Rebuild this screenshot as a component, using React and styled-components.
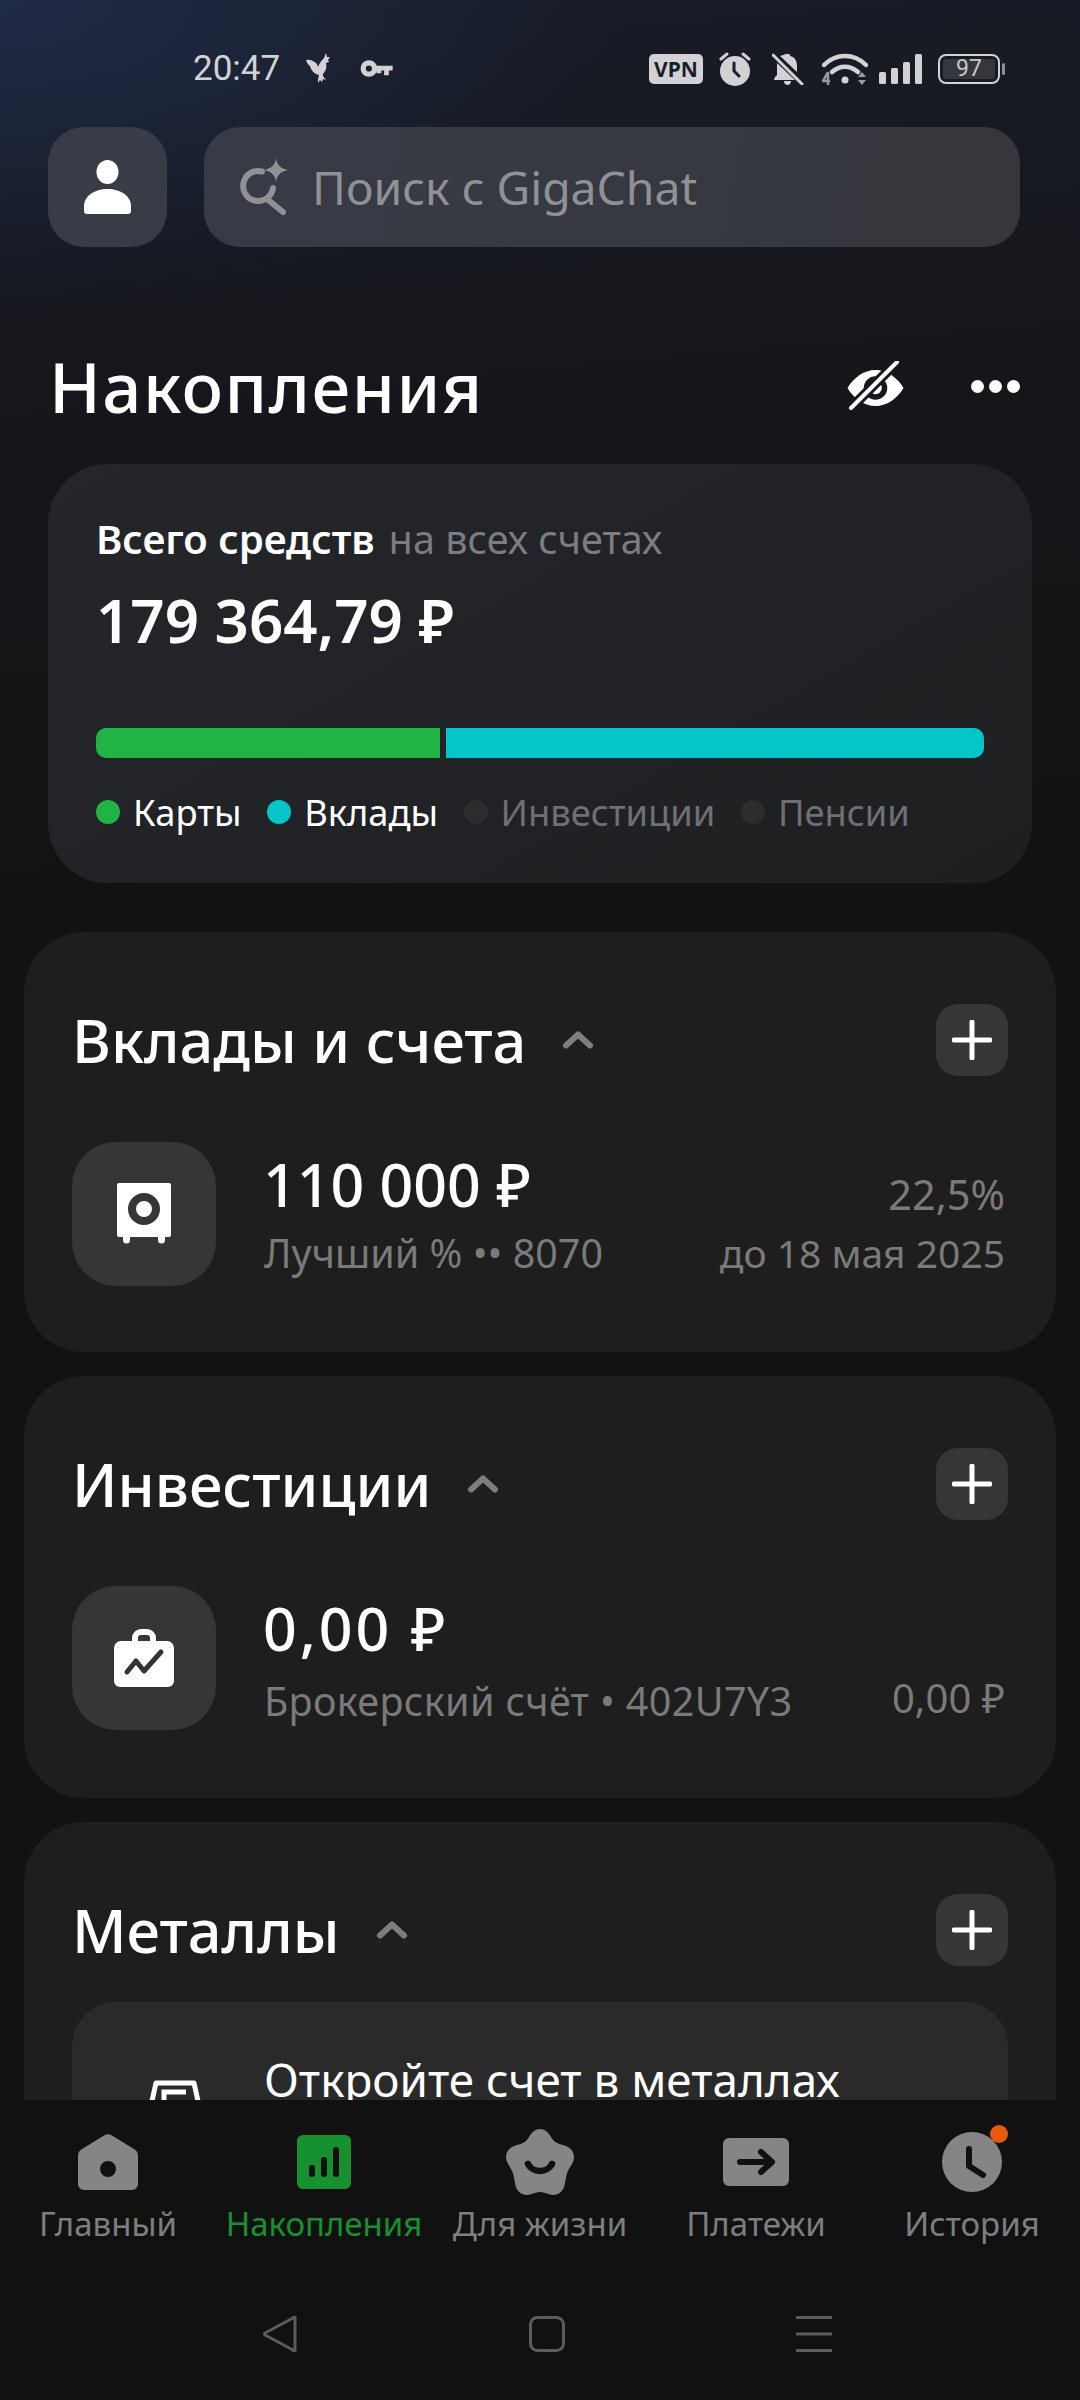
import React from "react";
import styled, { createGlobalStyle } from "styled-components";

const Chevron = () => (
  <ChevronSvg viewBox="0 0 32 18" fill="none">
    <path d="M4 14.500L16 3.500l12 11" stroke="#7d7d7d" strokeWidth="6" strokeLinecap="round" strokeLinejoin="round" />
  </ChevronSvg>
);

const Plus = () => (
  <PlusBtn>
    <svg width="40" height="40" viewBox="0 0 40 40" fill="none">
      <path d="M20 2v36M2 20h36" stroke="#fff" strokeWidth="5" strokeLinecap="round" />
    </svg>
  </PlusBtn>
);

const SafeIcon = () => (
  <svg width="54" height="62" viewBox="0 0 54 62">
    <path
      fillRule="evenodd"
      fill="#fff"
      d="M2 0h50a2 2 0 0 1 2 2v50a2 2 0 0 1-2 2h-4v3a3.500 3.500 0 0 1-7 0v-3H13v3a3.500 3.500 0 0 1-7 0v-3H2a2 2 0 0 1-2-2V2a2 2 0 0 1 2-2zM27 10a16 16 0 1 0 0 32 16 16 0 0 0 0-32zM27 18a8 8 0 1 1 0 16 8 8 0 0 1 0-16z"
    />
  </svg>
);

const CaseIcon = () => (
  <svg width="60" height="58" viewBox="0 0 60 58">
    <path
      fill="#fff"
      d="M18 12V9a9 9 0 0 1 9-9h6a9 9 0 0 1 9 9v3h11a7 7 0 0 1 7 7v33a6 6 0 0 1-6 6H6a6 6 0 0 1-6-6V19a7 7 0 0 1 7-7zm6 0h12V9a3 3 0 0 0-3-3h-6a3 3 0 0 0-3 3z"
    />
    <path d="M13 43l9-11 8 10 17-19" fill="none" stroke="#333" strokeWidth="5" strokeLinecap="round" strokeLinejoin="round" />
  </svg>
);

const MetalIcon = () => (
  <svg width="58" height="40" viewBox="0 0 58 40" fill="none">
    <path d="M10 3h38l8 36H2z" stroke="#fff" strokeWidth="5" strokeLinejoin="round" />
    <path d="M18 28V12h22" stroke="#fff" strokeWidth="5" />
  </svg>
);

const HomeIcon = () => (
  <svg width="60" height="56" viewBox="0 0 60 56">
    <path
      fillRule="evenodd"
      fill="#858585"
      d="M26 1.500a8 8 0 0 1 8 0l22 13.500a8 8 0 0 1 4 7V50a6 6 0 0 1-6 6H6a6 6 0 0 1-6-6V22a8 8 0 0 1 4-7zM30 27a8 8 0 1 0 0 16 8 8 0 0 0 0-16z"
    />
  </svg>
);

const BarsIcon = () => (
  <svg width="54" height="54" viewBox="0 0 54 54">
    <rect width="54" height="54" rx="6" fill="#17902f" />
    <g fill="#111">
      <rect x="12" y="30" width="6" height="12" rx="3" />
      <rect x="24" y="22" width="6" height="20" rx="3" />
      <rect x="36" y="12" width="6" height="30" rx="3" />
    </g>
  </svg>
);

const StarIcon = () => (
  <svg width="68" height="66" viewBox="0 0 68 66">
    <path
      fill="#858585"
      d="M34 0c5 0 8 3 11 8 3 5 7 7 12 8 7 2 11 6 11 12 0 5-3 8-5 12-3 5-3 10-4 14-1 8-6 12-12 12-4 0-8-3-13-3s-9 3-13 3c-6 0-11-4-12-12-1-4-1-9-4-14-2-4-5-7-5-12 0-6 4-10 11-12 5-1 9-3 12-8 3-5 6-8 11-8z"
    />
    <path d="M22 35c2 4 7 7 12 7s10-3 12-7" fill="none" stroke="#111" strokeWidth="6.500" strokeLinecap="round" />
  </svg>
);

const PayIcon = () => (
  <svg width="66" height="48" viewBox="0 0 66 48">
    <rect width="66" height="48" rx="6" fill="#858585" />
    <path d="M17 24h31M38 14l11 10-11 10" fill="none" stroke="#111" strokeWidth="6" strokeLinecap="round" strokeLinejoin="round" />
  </svg>
);

const ClockIcon = () => (
  <svg width="60" height="60" viewBox="0 0 60 60">
    <circle cx="30" cy="30" r="30" fill="#858585" />
    <path d="M27 17v17l14 9" fill="none" stroke="#111" strokeWidth="6" strokeLinecap="round" strokeLinejoin="round" />
  </svg>
);

const tabs = [
  { label: "Главный", icon: <HomeIcon /> },
  { label: "Накопления", icon: <BarsIcon />, active: true },
  { label: "Для жизни", icon: <StarIcon /> },
  { label: "Платежи", icon: <PayIcon /> },
  { label: "История", icon: <ClockIcon />, badge: true },
];

const legend = [
  { label: "Карты", color: "#22b345", on: true },
  { label: "Вклады", color: "#04c6c8", on: true },
  { label: "Инвестиции", color: "#2c2d2f" },
  { label: "Пенсии", color: "#2c2d2f" },
];

const App = () => {
  return (
    <>
      <GlobalStyle />
      <Screen>
        <Scroll>
          <StatusBar>
            <Time>20:47</Time>
            <svg width="28" height="31" viewBox="0 0 28 31" fill="#d2d2d5">
              <path d="M0 7c4-1 8 1 11 4 0 1 1 2 1 3 1-3 3-6 6-9l2-5 1 4 3 0-2 3 1 2-3 1c1 4 0 8-3 11l0 2 3 4-3-1-1 3-2-2-2 3 0-4 1-4C8 21 5 17 4 13 2 12 1 10 0 7z" />
            </svg>
            <svg width="33" height="19" viewBox="0 0 34 20" fill="none">
              <circle cx="9" cy="10" r="6" stroke="#d2d2d5" strokeWidth="5.500" />
              <path d="M14 7h20v5h-4v5h-5v-5h-3v3h-5v-3h-3z" fill="#d2d2d5" />
            </svg>
            <StatusRight>
              <VpnBadge>VPN</VpnBadge>
              <svg width="32" height="34" viewBox="0 0 32 34">
                <circle cx="16" cy="19" r="15" fill="#d2d2d5" />
                <path d="M15 11v8l5 5" fill="none" stroke="#1a1e28" strokeWidth="3" strokeLinecap="round" />
                <path d="M2 7l6-5M30 7l-6-5" stroke="#d2d2d5" strokeWidth="3" strokeLinecap="round" />
              </svg>
              <BellSvg width="32" height="32" viewBox="0 0 32 32">
                <path
                  d="M14 1h3a1.500 1.500 0 0 1 1 2c5 1 7 5 7 10v6l-17-16zM5 10l18 17H2c0-2 1-3 3-5zM12 28h7c0 3-2 4-3.500 4S12 31 12 28z"
                  fill="#d2d2d5"
                />
                <path d="M1 2l29 29" stroke="#d2d2d5" strokeWidth="3" strokeLinecap="round" />
              </BellSvg>
              <WifiSvg width="46" height="34" viewBox="0 0 46 34" fill="none">
                <path d="M2 13C14 1 32 1 44 13" stroke="#d2d2d5" strokeWidth="4.500" strokeLinecap="round" />
                <path d="M10 20c8-7 18-7 26 0" stroke="#d2d2d5" strokeWidth="4.500" strokeLinecap="round" />
                <circle cx="23" cy="28" r="3.500" fill="#d2d2d5" />
                <path d="M6 20l-5 9h7M6 20v13" stroke="#9a9a9d" strokeWidth="2.500" />
                <path d="M36 25l4-5 4 5zM36 28l4 5 4-5z" fill="#9a9a9d" />
              </WifiSvg>
              <svg width="43" height="30" viewBox="0 0 43 30" fill="#d2d2d5">
                <rect y="18" width="7" height="12" rx="1.500" />
                <rect x="12" y="14" width="7" height="16" rx="1.500" />
                <rect x="24" y="8" width="7" height="22" rx="1.500" />
                <rect x="36" width="7" height="30" rx="1.500" />
              </svg>
              <Battery>
                <BatteryFill>97</BatteryFill>
              </Battery>
            </StatusRight>
          </StatusBar>

          <SearchRow>
            <Avatar>
              <svg width="47" height="54" viewBox="0 0 47 54" fill="#fff">
                <ellipse cx="23.500" cy="12" rx="11" ry="12" />
                <path d="M23.500 29c13 0 23.500 7 23.500 17v5a3 3 0 0 1-3 3H3a3 3 0 0 1-3-3v-5c0-10 10.500-17 23.500-17z" />
              </svg>
            </Avatar>
            <SearchBox>
              <svg width="50" height="58" viewBox="0 0 50 58" fill="none">
                <path d="M22 13.500A15 15 0 1 0 33 30M27 41l16 13" stroke="#8f9196" strokeWidth="6" strokeLinecap="round" />
                <path d="M36 0c1 7 4 10 12 12-8 2-11 5-12 12-1-7-4-10-12-12 8-2 11-5 12-12z" fill="#8f9196" />
              </svg>
              <SearchText>Поиск с GigaChat</SearchText>
            </SearchBox>
          </SearchRow>

          <TitleRow>
            <PageTitle>Накопления</PageTitle>
            <svg width="58" height="50" viewBox="0 0 58 50" fill="none">
              <path fill="#fff" d="M28.500 9c12 0 22 8 28 18-6 10-16 18-28 18S6.500 37 .5 27c6-10 16-18 28-18z" />
              <circle cx="28.500" cy="27" r="9" stroke="#15181e" strokeWidth="5.500" />
              <path d="M50 1L4 47" stroke="#15181e" strokeWidth="10" />
              <path d="M50 1L4 47" stroke="#fff" strokeWidth="4" strokeLinecap="round" />
            </svg>
            <Dots>
              <i />
              <i />
              <i />
            </Dots>
          </TitleRow>

          <Summary>
            <SummaryHead>
              <b>Всего средств</b>
              <span>на всех счетах</span>
            </SummaryHead>
            <SummaryAmount>179 364,79 ₽</SummaryAmount>
            <Bar>
              <BarPart $grow={344} $color="#22b345" />
              <BarPart $grow={538} $color="#04c6c8" />
            </Bar>
            <Legend>
              {legend.map((item) => (
                <LegendItem key={item.label} $on={item.on}>
                  <LegendDot $color={item.color} />
                  {item.label}
                </LegendItem>
              ))}
            </Legend>
          </Summary>

          <Section $bottom={66}>
            <SectionHead>
              <SectionTitle>Вклады и счета</SectionTitle>
              <Chevron />
              <Plus />
            </SectionHead>
            <Row>
              <RowIcon>
                <SafeIcon />
              </RowIcon>
              <RowMain>
                <RowAmount>110 000 ₽</RowAmount>
                <RowSub>Лучший % •• 8070</RowSub>
              </RowMain>
              <RowSide>
                <RowSideValue $size={41.5}>22,5%</RowSideValue>
                <RowSub $gap={11} $size={39}>
                  до 18 мая 2025
                </RowSub>
              </RowSide>
            </Row>
          </Section>

          <Section $bottom={68}>
            <SectionHead>
              <SectionTitle>Инвестиции</SectionTitle>
              <Chevron />
              <Plus />
            </SectionHead>
            <Row>
              <RowIcon>
                <CaseIcon />
              </RowIcon>
              <RowMain>
                <RowAmount $spacing={3}>0,00 ₽</RowAmount>
                <RowSub $gap={9} $spacing={0.36}>
                  Брокерский счёт • 402U7Y3
                </RowSub>
              </RowMain>
              <RowSide>
                <RowSideValue $top={88}>0,00 ₽</RowSideValue>
              </RowSide>
            </Row>
          </Section>

          <Section>
            <SectionHead>
              <SectionTitle>Металлы</SectionTitle>
              <Chevron />
              <Plus />
            </SectionHead>
            <Promo>
              <PromoIcon>
                <MetalIcon />
              </PromoIcon>
              <PromoText>Откройте счет в металлах</PromoText>
            </Promo>
          </Section>
        </Scroll>

        <TabBar>
          {tabs.map((tab) => (
            <Tab key={tab.label} $active={tab.active}>
              <TabIcon>
                {tab.icon}
                {tab.badge && <Badge />}
              </TabIcon>
              {tab.label}
            </Tab>
          ))}
        </TabBar>

        <GestureBar>
          <svg width="36" height="36" viewBox="0 0 36 36" fill="none">
            <path d="M33 2v32a1 1 0 0 1-2 0L3 19a1.500 1.500 0 0 1 0-2L31 2a1 1 0 0 1 2 0z" stroke="#5c5c5c" strokeWidth="3" strokeLinejoin="round" />
          </svg>
          <svg width="36" height="36" viewBox="0 0 36 36" fill="none">
            <rect x="1.500" y="1.500" width="33" height="33" rx="7" stroke="#5c5c5c" strokeWidth="3" />
          </svg>
          <svg width="36" height="36" viewBox="0 0 36 36" fill="#5c5c5c">
            <rect y="0" width="36" height="3" />
            <rect y="16.500" width="36" height="3" />
            <rect y="33" width="36" height="3" />
          </svg>
        </GestureBar>
      </Screen>
    </>
  );
};

const GlobalStyle = createGlobalStyle`
  html, body {
    margin: 0;
    padding: 0;
    background: #121212;
  }
  * {
    box-sizing: border-box;
  }
`;

const Screen = styled.div`
  width: 1080px;
  height: 2400px;
  display: flex;
  flex-direction: column;
  overflow: hidden;
  font-family: "Noto Sans", "Liberation Sans", sans-serif;
  color: #fff;
  background: #111;
`;

const Scroll = styled.div`
  height: 2100px;
  flex-shrink: 0;
  overflow: hidden;
  background: radial-gradient(ellipse 620px 300px at 0 0, #1f2a46 0%, rgba(31, 42, 70, 0) 100%),
    linear-gradient(175deg, #191d28 0%, #15171c 380px, #121212 900px);
`;

const StatusBar = styled.div`
  height: 127px;
  padding: 10px 80px 0 193px;
  display: flex;
  align-items: center;
  gap: 26px;
`;

const Time = styled.div`
  font-family: Roboto, sans-serif;
  font-size: 35px;
  line-height: 38px;
  color: #d2d2d5;
`;

const StatusRight = styled.div`
  margin-left: auto;
  display: flex;
  align-items: center;
  gap: 16px;
`;

const VpnBadge = styled.div`
  width: 54px;
  height: 30px;
  border-radius: 5px;
  background: #d2d2d5;
  color: #1a1e28;
  font-size: 21px;
  font-weight: 700;
  line-height: 30px;
  text-align: center;
`;

const BellSvg = styled.svg`
  margin: 0 2px 0 5px;
`;

const WifiSvg = styled.svg`
  margin-right: -5px;
`;

const Battery = styled.div`
  width: 62px;
  height: 30px;
  padding: 3px;
  border: 2px solid #d2d2d5;
  border-radius: 8px;
  position: relative;
  &:after {
    content: "";
    position: absolute;
    right: -7px;
    top: 7px;
    width: 3px;
    height: 12px;
    border-radius: 2px;
    background: #8f8f92;
  }
`;

const BatteryFill = styled.div`
  height: 100%;
  border-radius: 3px;
  background: #35373d;
  color: #c8c8cb;
  font-family: Roboto, sans-serif;
  font-size: 23px;
  line-height: 20px;
  text-align: center;
`;

const SearchRow = styled.div`
  height: 120px;
  padding: 0 60px 0 48px;
  display: flex;
  gap: 37px;
`;

const Avatar = styled.div`
  width: 119px;
  border-radius: 36px;
  background: #383c47;
  display: flex;
  align-items: center;
  justify-content: center;
`;

const SearchBox = styled.div`
  flex: 1;
  border-radius: 36px;
  background: linear-gradient(100deg, #383b46 0%, #35373c 100%);
  padding: 0 36px;
  display: flex;
  align-items: center;
  gap: 22px;
`;

const SearchText = styled.div`
  font-size: 46.3px;
  color: #8f9196;
`;

const TitleRow = styled.div`
  height: 120px;
  margin: 79px 60px 18px 49px;
  display: flex;
  align-items: center;
  gap: 66px;
`;

const PageTitle = styled.h1`
  margin: 0 auto 0 0;
  font-size: 69px;
  font-weight: 500;
  letter-spacing: 1.5px;
  line-height: 1;
`;

const Dots = styled.div`
  display: flex;
  gap: 5px;
  i {
    width: 13px;
    height: 13px;
    border-radius: 50%;
    background: #fff;
  }
`;

const Summary = styled.div`
  height: 419px;
  margin: 0 48px 49px;
  padding: 50px 48px 0;
  border-radius: 60px;
  background: linear-gradient(150deg, #24262a 0%, #1e1f21 100%);
`;

const SummaryHead = styled.div`
  display: flex;
  gap: 14px;
  font-size: 40px;
  line-height: 50px;
  b {
    font-weight: 600;
  }
  span {
    font-size: 39.6px;
    color: #7c7d80;
  }
`;

const SummaryAmount = styled.div`
  margin-top: 16px;
  font-size: 60px;
  font-weight: 600;
  line-height: 80px;
`;

const Bar = styled.div`
  height: 30px;
  margin-top: 68px;
  display: flex;
  gap: 6px;
  border-radius: 10px;
  overflow: hidden;
`;

const BarPart = styled.div`
  flex: ${(props) => props.$grow};
  background: ${(props) => props.$color};
`;

const Legend = styled.div`
  margin-top: 29px;
  display: flex;
  gap: 25.5px;
`;

const LegendItem = styled.div`
  display: flex;
  align-items: center;
  gap: 13px;
  font-size: 36.3px;
  line-height: 50px;
  color: ${(props) => (props.$on ? "#fff" : "#6f7073")};
`;

const LegendDot = styled.span`
  width: 24px;
  height: 24px;
  border-radius: 50%;
  background: ${(props) => props.$color};
`;

const Section = styled.div`
  margin: 0 24px 24px;
  padding: 72px 48px ${(props) => props.$bottom || 66}px;
  border-radius: 60px;
  background: #1e1e1e;
`;

const SectionHead = styled.div`
  height: 72px;
  display: flex;
  align-items: center;
  gap: 36px;
`;

const SectionTitle = styled.h2`
  margin: 0;
  font-size: 59.5px;
  font-weight: 500;
  line-height: 1;
`;

const ChevronSvg = styled.svg`
  width: 32px;
  height: 18px;
`;

const PlusBtn = styled.div`
  width: 72px;
  height: 72px;
  margin-left: auto;
  border-radius: 22px;
  background: #363636;
  display: flex;
  align-items: center;
  justify-content: center;
`;

const Row = styled.div`
  margin-top: 66px;
  display: flex;
  height: 144px;
`;

const RowIcon = styled.div`
  width: 144px;
  height: 144px;
  border-radius: 44px;
  background: #363636;
  display: flex;
  align-items: center;
  justify-content: center;
  flex-shrink: 0;
`;

const RowMain = styled.div`
  margin-left: 48px;
  flex: 1;
`;

const RowAmount = styled.div`
  margin: 2px 0 0 -1px;
  font-size: 59px;
  font-weight: 500;
  line-height: 80px;
  letter-spacing: ${(props) => props.$spacing || 0}px;
`;

const RowSub = styled.div`
  margin-top: ${(props) => props.$gap || 5}px;
  font-size: ${(props) => props.$size || 39.5}px;
  line-height: 48px;
  letter-spacing: ${(props) => props.$spacing || 0}px;
  color: #7a7a7a;
`;

const RowSide = styled.div`
  padding-right: 3px;
  text-align: right;
`;

const RowSideValue = styled.div`
  margin-top: ${(props) => props.$top || 28}px;
  font-size: ${(props) => props.$size || 40}px;
  line-height: 48px;
  color: #7a7a7a;
`;

const Promo = styled.div`
  margin-top: 36px;
  height: 240px;
  padding: 49px 74px 0;
  border-radius: 44px;
  background: #2a2a2a;
  display: flex;
  align-items: flex-start;
  gap: 60px;
`;

const PromoIcon = styled.div`
  padding-top: 29px;
  display: flex;
`;

const PromoText = styled.div`
  font-size: 45.8px;
  line-height: 56px;
  white-space: nowrap;
`;

const TabBar = styled.div`
  height: 170px;
  flex-shrink: 0;
  padding-top: 22px;
  display: grid;
  grid-template-columns: repeat(5, 216px);
`;

const Tab = styled.div`
  display: flex;
  flex-direction: column;
  align-items: center;
  font-size: 33px;
  line-height: 44px;
  color: ${(props) => (props.$active ? "#17902f" : "#7e7e7e")};
`;

const TabIcon = styled.div`
  height: 80px;
  display: flex;
  align-items: center;
  justify-content: center;
  position: relative;
`;

const Badge = styled.span`
  position: absolute;
  top: 3px;
  right: -6px;
  width: 18px;
  height: 18px;
  border-radius: 50%;
  background: #e65a0a;
`;

const GestureBar = styled.div`
  flex: 1;
  padding: 46px 248px 0 262px;
  display: flex;
  justify-content: space-between;
  align-items: flex-start;
`;

export default App;
